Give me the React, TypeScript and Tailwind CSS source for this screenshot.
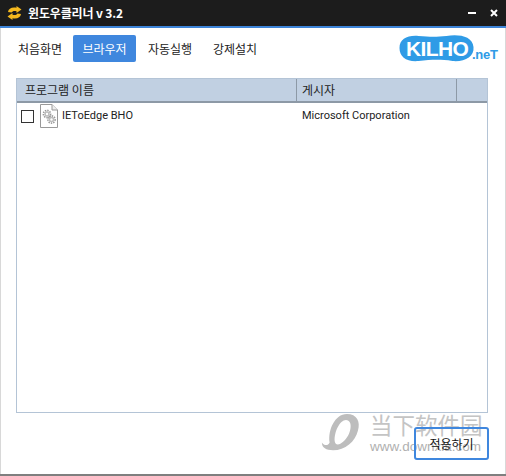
const Gear = ({ cx, cy, r }: { cx: number; cy: number; r: number }) => (
  <g>
    <circle cx={cx} cy={cy} r={r + 0.6} fill="none" stroke="#9a9a9a" strokeWidth="1.6" strokeDasharray="1.4 1" />
    <circle cx={cx} cy={cy} r={r - 0.3} fill="#bdbdbd" />
    <circle cx={cx} cy={cy} r={r - 1.8} fill="#fff" />
  </g>
);

export default function App() {
  const font = { fontFamily: '"Noto Sans CJK KR", "Liberation Sans", sans-serif' };
  return (
    <div className="relative flex h-[476px] w-[506px] flex-col overflow-hidden border-b-2 border-[#7f7f7f] bg-white font-['Roboto','Noto_Sans_CJK_KR',sans-serif] text-[11px] text-[#222]">
      <div className="flex h-[28px] shrink-0 items-center border-b-2 border-[#3d84d8] bg-[#1c1c1c] pl-[7px] text-white">
        <svg width="15" height="14" viewBox="0 0 15 14" className="mr-[6px]">
          <path d="M1 6 C1.5 2.5 5 0.8 9.5 1.8 L9.5 0 L14.5 3.6 L9.5 7 L9.5 5.2 C7 4.6 5.5 5 4.6 6.5 Z" fill="#f5b91e" />
          <path d="M14 8 C13.5 11.5 10 13.2 5.5 12.2 L5.5 14 L0.5 10.4 L5.5 7 L5.5 8.8 C8 9.4 9.5 9 10.4 7.5 Z" fill="#f5b91e" />
        </svg>
        <span className="text-[12px] font-bold tracking-[-0.15px]" style={font}>윈도우클리너 v 3.2</span>
        <div className="ml-auto flex items-center pr-[8px]">
          <span className="mr-[14px] h-[2px] w-[8px] bg-white" />
          <svg width="8" height="8" viewBox="0 0 8 8"><path d="M1 1 L7 7 M7 1 L1 7" stroke="#fff" strokeWidth="2" /></svg>
        </div>
      </div>
      <div className="flex min-h-0 flex-1 flex-col border-x border-[#d8d8d8] px-[15px]">
        <div className="flex h-[50px] shrink-0 items-start pt-[7px]">
          <div className="flex items-center text-[12px]" style={font}>
            <span className="flex h-[27px] w-[57px] items-center justify-start pl-[2px]">처음화면</span>
            <span className="flex h-[27px] w-[63px] items-center justify-center rounded-[2px] bg-[#3f87de] text-white">브라우저</span>
            <span className="flex h-[27px] w-[65px] items-center justify-center pl-[3px]">자동실행</span>
            <span className="flex h-[27px] w-[65px] items-center justify-center pl-[3px]">강제설치</span>
          </div>
          <div className="relative ml-auto mr-[-7px] mt-[-1px] h-[30px] w-[99px]">
            <svg width="77" height="29" viewBox="0 0 76 29" className="absolute left-0 top-0">
              <path d="M1 14 C1 5 9 1 20 2 C32 3 38 3 48 2 C60 0 74 2 75 13 C76 23 66 28 54 27 C40 25 32 26 20 27 C8 28 1 23 1 14 Z" fill="#2f9be6" />
            </svg>
            <span className="absolute left-[8px] top-[2px] text-[21px] font-bold leading-[26px] tracking-[-0.6px] text-white" style={{ fontFamily: '"Liberation Sans", sans-serif' }}>KILHO</span>
            <span className="absolute left-[74px] top-[8px] text-[13px] font-bold leading-[26px] tracking-[-0.3px] text-[#2f9be6]" style={{ fontFamily: '"Liberation Sans", sans-serif' }}>.neT</span>
          </div>
        </div>
        <div className="flex h-[335px] w-[472px] shrink-0 flex-col border border-[#b4c4d6]">
          <div className="flex h-[24px] shrink-0 items-stretch border-b-2 border-[#8d99a6] bg-[#c1d0e2] text-[12px]" style={font}>
            <div className="flex w-[280px] items-center border-r border-[#8d99a6] pl-[8px]">프로그램 이름</div>
            <div className="flex w-[160px] items-center border-r border-[#8d99a6] pl-[5px]">게시자</div>
            <div className="flex-1" />
          </div>
          <div className="flex h-[26px] items-center">
            <div className="flex w-[285px] items-center pl-[4px]">
              <span className="h-[13px] w-[13px] border border-[#333] bg-white" />
              <svg width="18" height="24" viewBox="0 0 18 24" className="ml-[6px]">
                <path d="M0.5 0.5 H12 L17.5 6 V23.5 H0.5 Z" fill="#fff" stroke="#999" />
                <path d="M12 0.5 V6 H17.5" fill="#eee" stroke="#999" />
                <Gear cx={7} cy={10} r={3} />
                <Gear cx={11.5} cy={15.5} r={3} />
              </svg>
              <span className="ml-[4px]">IEToEdge BHO</span>
            </div>
            <span>Microsoft Corporation</span>
          </div>
        </div>
      </div>
      <div className="absolute left-[321px] top-[410px] h-[46px] w-[170px]">
        <svg width="43" height="44" viewBox="0 0 50 46" className="absolute left-0 top-[1px]">
          <path fillRule="evenodd" d="M30 1 C42 1 46 10 43 20 C40 33 28 43 14 43 C6 43 1 40 1 34 C4 38 8 38 10 34 C8 20 16 1 30 1 Z M29 8 C22 8 15 22 16 33 C17 38 22 37 27 32 C35 25 38 8 29 8 Z" fill="#bdbdbd" />
        </svg>
        <span className="absolute left-[49px] top-[-1px] text-[22.5px] leading-[30px] text-[#c4c4c4]" style={{ fontFamily: '"Noto Sans CJK SC", sans-serif' }}>当下软件园</span>
        <span className="absolute left-[49px] top-[29px] text-[13.5px] leading-[16px] text-[#b0b0b0]" style={{ fontFamily: '"Liberation Sans", sans-serif' }}>www.downxia.com</span>
      </div>
      <div className="absolute left-[414px] top-[427px] flex h-[33px] w-[75px] items-center justify-center rounded-[3px] border-2 border-[#3f87de] text-[12px] text-[#111]" style={font}>적용하기</div>
    </div>
  );
}
